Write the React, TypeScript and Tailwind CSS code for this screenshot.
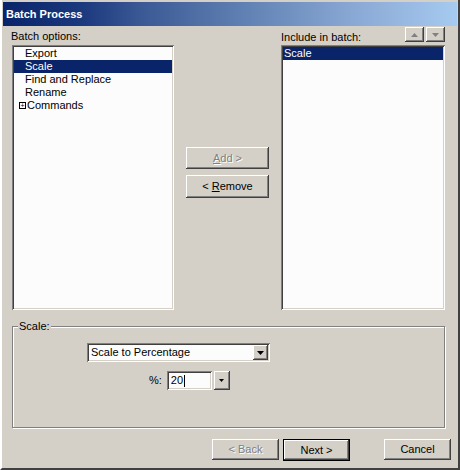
import React from "react";

const raised =
  "shadow-[inset_-1px_-1px_#404040,inset_1px_1px_#ffffff,inset_-2px_-2px_#808080,inset_2px_2px_#d4d0c8]";
const sunken =
  "shadow-[inset_1px_1px_#808080,inset_-1px_-1px_#ffffff,inset_2px_2px_#404040,inset_-2px_-2px_#d4d0c8]";

const Btn: React.FC<{ children: React.ReactNode; disabled?: boolean; def?: boolean; className?: string }> = ({
  children,
  disabled,
  def,
  className = "",
}) => (
  <div
    className={`flex items-center justify-center bg-[#d4d0c8] ${raised} ${
      def ? "outline outline-1 outline-black" : ""
    } ${disabled ? "text-[#808080] [text-shadow:1px_1px_#ffffff]" : "text-black"} ${className}`}
  >
    {children}
  </div>
);

const Arrow: React.FC<{ up?: boolean; color?: string }> = ({ up, color = "#000" }) => (
  <svg width="7" height="4" viewBox="0 0 7 4">
    <polygon points={up ? "3.5,0 7,4 0,4" : "0,0 7,0 3.5,4"} fill={color} />
  </svg>
);

const batchOptions = ["Export", "Scale", "Find and Replace", "Rename"];

const App: React.FC = () => {
  return (
    <div className="w-[460px] h-[470px] bg-[#d4d0c8] flex flex-col border-l-2 border-l-[#ffffff] border-r-2 border-r-[#404040] border-b-2 border-b-[#404040] text-[11px] leading-none font-['Liberation_Sans',Arial,sans-serif] overflow-hidden">
      {/* title bar */}
      <div className="mx-px mt-[2px] h-[24px] flex items-center pl-[3px] bg-[linear-gradient(to_right,#0a246a_0%,#1c3a7e_18%,#3a5894_30%,#5373a8_45%,#6b8cbc_60%,#88a6d2_76%,#a6caf0_100%)]">
        <span className="text-white font-bold text-[11px]">Batch Process</span>
      </div>

      {/* lists */}
      <div className="flex pl-[10px] pr-[13px] mt-px">
        <div className="w-[162px] flex flex-col">
          <div className="h-[18px] flex items-center pt-px">
            <span className="-ml-px">Batch options:</span>
          </div>
          <div className={`h-[265px] bg-[#fbfcfb] p-[2px] ${sunken}`}>
            {batchOptions.map((o) => (
              <div
                key={o}
                className={`h-[13px] flex items-center pl-[11px] ${
                  o === "Scale" ? "bg-[#0a246a] text-white" : "text-black"
                }`}
              >
                {o}
              </div>
            ))}
            <div className="h-[13px] flex items-center pl-[5px]">
              <span className="w-[7px] h-[7px] border border-black flex items-center justify-center text-[7px] leading-none">
                +
              </span>
              <span className="ml-[1px]">Commands</span>
            </div>
          </div>
        </div>

        <div className="w-[107px] flex flex-col items-center pt-[120px] gap-[6px]">
          <Btn disabled className="w-[83px] h-[22px]">
            <span>
              <span className="underline">A</span>dd &gt;
            </span>
          </Btn>
          <Btn className="w-[83px] h-[23px]">
            <span>
              &lt; <span className="underline">R</span>emove
            </span>
          </Btn>
        </div>

        <div className="w-[164px] flex flex-col">
          <div className="h-[18px] flex items-start justify-between">
            <span className="mt-[5px]">Include in batch:</span>
            <div className="flex gap-[2px]">
              <Btn className="w-[19px] h-[15px]">
                <Arrow up color="#808080" />
              </Btn>
              <Btn className="w-[19px] h-[15px]">
                <Arrow color="#808080" />
              </Btn>
            </div>
          </div>
          <div className={`h-[265px] bg-[#fbfcfb] p-[2px] ${sunken}`}>
            <div className="h-[13px] flex items-center pl-[1px] bg-[#0a246a] text-white">Scale</div>
          </div>
        </div>
      </div>

      {/* scale group */}
      <div className="mx-[10px] mr-[13px] mt-[16px] h-[102px] relative border border-[#808080] shadow-[1px_1px_#ffffff,inset_1px_1px_#ffffff] flex flex-col">
        <span className="absolute -top-[6px] left-[5px] bg-[#d4d0c8] px-px">Scale:</span>
        <div className={`ml-[74px] mt-[16px] w-[183px] h-[19px] bg-[#fbfcfb] flex items-center justify-between ${sunken}`}>
          <span className="pl-[4px]">Scale to Percentage</span>
          <Btn className="w-[15px] h-[15px] mr-[2px]">
            <Arrow />
          </Btn>
        </div>
        <div className="flex items-center mt-[9px] ml-[136px]">
          <span className="mr-[5px]">%:</span>
          <div className={`w-[45px] h-[19px] bg-[#fbfcfb] flex items-center pl-[4px] ${sunken}`}>
            <span>20</span>
            <span className="w-px h-[12px] bg-black ml-px" />
          </div>
          <Btn className="w-[16px] h-[19px] ml-[2px]">
            <svg width="5" height="3" viewBox="0 0 5 3">
              <polygon points="0,0 5,0 2.5,3" fill="#000" />
            </svg>
          </Btn>
        </div>
      </div>

      {/* bottom buttons */}
      <div className="flex mt-[11px] pl-[210px]">
        <Btn disabled className="w-[67px] h-[21px]">&lt; Back</Btn>
        <Btn def className="w-[65px] h-[20px] ml-[5px] mt-px">Next &gt;</Btn>
        <Btn className="w-[67px] h-[21px] ml-[35px]">Cancel</Btn>
      </div>
    </div>
  );
};

export default App;
